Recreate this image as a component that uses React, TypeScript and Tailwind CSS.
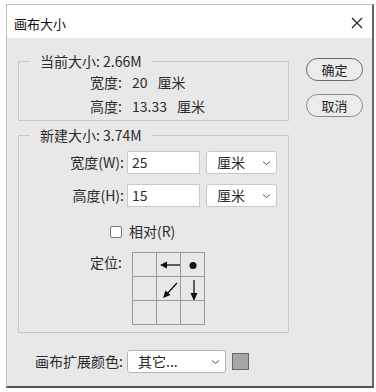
import React from 'react';

const font = { fontFamily: '"Noto Sans CJK SC", "Liberation Sans", sans-serif' };

const Chevron = () => (
  <svg width="9" height="6" viewBox="0 0 9 6" className="text-[#555]">
    <path d="M1 1.5 L4.5 4.5 L8 1.5" fill="none" stroke="currentColor" strokeWidth="1" />
  </svg>
);

const UnitSelect = () => (
  <div className="flex h-[23px] w-[71px] shrink-0 items-center justify-between rounded-[3px] border border-[#c9c9c9] bg-white pl-[10px] pr-[5px]">
    <span>厘米</span>
    <Chevron />
  </div>
);

const SizeInput = ({ value }: { value: string }) => (
  <div className="flex h-[23px] w-[73px] shrink-0 items-center border border-[#c9c9c9] bg-white pl-[4px]">{value}</div>
);

type Anchor = 'left' | 'dot' | 'downLeft' | 'down' | undefined;

const AnchorCell = ({ kind }: { kind?: Anchor }) => (
  <div className="h-[23px] w-[23px] bg-[#e8e8e8]">
    {kind && (
      <svg width="23" height="23" viewBox="0 0 23 23">
        {kind === 'left' && (
          <>
            <line x1="9" y1="12" x2="23" y2="12" stroke="#111" strokeWidth="1.3" />
            <path d="M3 12 L10 8.5 L10 15.5 Z" fill="#111" />
          </>
        )}
        {kind === 'dot' && <circle cx="12" cy="12.5" r="3.5" fill="#111" />}
        {kind === 'downLeft' && (
          <>
            <line x1="20" y1="6" x2="10" y2="17" stroke="#111" strokeWidth="1.3" />
            <path d="M6 21 L8.5 13.5 L13.5 18 Z" fill="#111" />
          </>
        )}
        {kind === 'down' && (
          <>
            <line x1="13" y1="3" x2="13" y2="18" stroke="#111" strokeWidth="1.3" />
            <path d="M13 24 L9.5 16 L16.5 16 Z" fill="#111" />
          </>
        )}
      </svg>
    )}
  </div>
);

export default function App() {
  const anchors: Anchor[] = [
    undefined, 'left', 'dot',
    undefined, 'downLeft', 'down',
    undefined, undefined, undefined,
  ];

  return (
    <div className="h-[392px] w-[376px] bg-white pl-[6px] pt-[4px] text-[14px] text-[#2b2b2b]" style={font}>
      <div className="flex h-[384px] w-[368px] flex-col border border-[#bdbdbd] border-b-2 border-r-2 border-b-[#555] border-r-[#666]">
        {/* Title bar */}
        <div className="flex h-[33px] items-center justify-between bg-white pl-[7px] pr-[9px] pt-[5px]">
          <span className="text-[13px] text-[#111]">画布大小</span>
          <svg width="12" height="12" viewBox="0 0 12 12" className="-mt-[3px]">
            <path d="M1 1 L11 11 M11 1 L1 11" stroke="#222" strokeWidth="1.2" />
          </svg>
        </div>

        {/* Body */}
        <div className="flex flex-1 bg-[#e8e8e8] pl-[11px] pt-[15px]">
          <div className="flex w-[271px] shrink-0 flex-col">
            <fieldset className="border border-[#c8c8c8] pb-[4px] pl-[71px]">
              <legend className="-ml-[60px] px-[10px] leading-[16px]">当前大小: 2.66M</legend>
              <div className="mt-[3px] grid h-[20px] grid-cols-[42px_auto_auto] items-center justify-start">
                <span>宽度:</span>
                <span>20</span>
                <span className="ml-[10px]">厘米</span>
              </div>
              <div className="mt-[4px] grid h-[20px] grid-cols-[42px_auto_auto] items-center justify-start">
                <span>高度:</span>
                <span>13.33</span>
                <span className="ml-[10px]">厘米</span>
              </div>
            </fieldset>

            <fieldset className="mt-[6px] border border-[#c8c8c8] pb-[7px]">
              <legend className="ml-[11px] px-[10px] leading-[16px]">新建大小: 3.74M</legend>
              <div className="mt-[8px] flex items-center">
                <span className="w-[108px] shrink-0 pr-[3px] text-right">宽度(W):</span>
                <SizeInput value="25" />
                <div className="ml-[6px]"><UnitSelect /></div>
              </div>
              <div className="mt-[10px] flex items-center">
                <span className="w-[108px] shrink-0 pr-[3px] text-right">高度(H):</span>
                <SizeInput value="15" />
                <div className="ml-[6px]"><UnitSelect /></div>
              </div>
              <div className="mt-[14px] flex items-center pl-[91px]">
                <div className="h-[12px] w-[12px] rounded-[2px] border border-[#777] bg-white" />
                <span className="ml-[7px]">相对(R)</span>
              </div>
              <div className="mt-[10px] flex">
                <span className="ml-[71px] w-[42px] shrink-0">定位:</span>
                <div className="grid grid-cols-3 gap-px bg-[#9a9a9a] p-px">
                  {anchors.map((a, i) => (
                    <AnchorCell key={i} kind={a} />
                  ))}
                </div>
              </div>
            </fieldset>

            <div className="mt-[17px] flex items-center">
              <span className="ml-[17px] w-[92px] shrink-0">画布扩展颜色:</span>
              <div className="flex h-[23px] w-[99px] shrink-0 items-center justify-between rounded-[3px] border border-[#b5b5b5] bg-white pl-[10px] pr-[5px]">
                <span>其它...</span>
                <Chevron />
              </div>
              <div className="ml-[6px] h-[17px] w-[17px] border border-[#666] bg-[#a6a6a6]" />
            </div>
          </div>

          <div className="ml-[17px] mt-[5px] flex flex-col gap-[13px]">
            <button className="h-[23px] w-[57px] rounded-full border border-[#6a6a6a] bg-[#ececec] text-[13px] text-[#222]">确定</button>
            <button className="h-[23px] w-[57px] rounded-full border border-[#8a8a8a] bg-[#ececec] text-[13px] text-[#222]">取消</button>
          </div>
        </div>
      </div>
    </div>
  );
}
